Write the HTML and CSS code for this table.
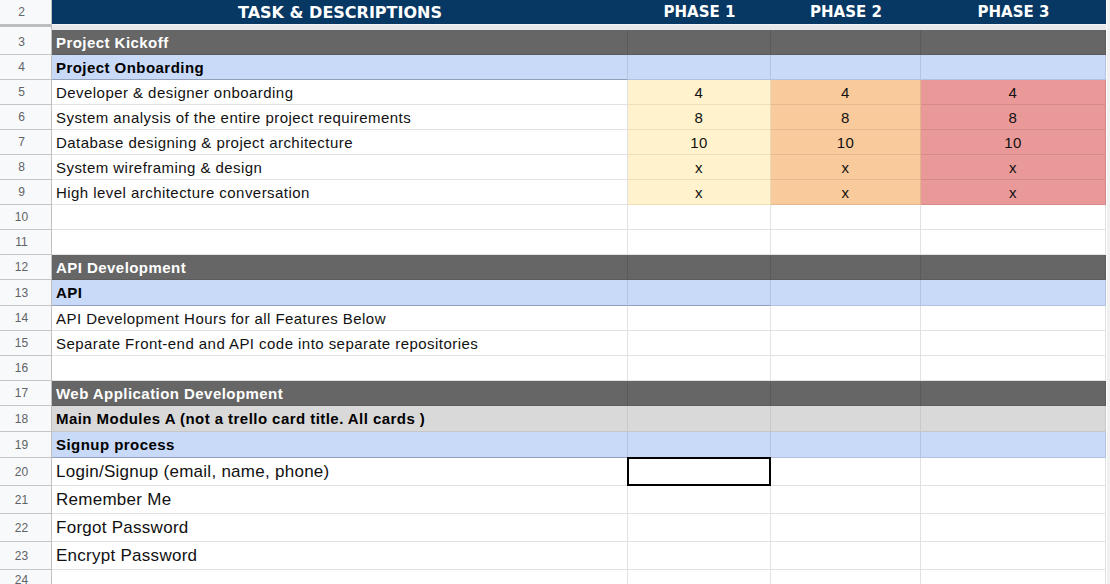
FILE: index.html
```html
<!DOCTYPE html>
<html>
<head>
<meta charset="utf-8">
<link rel="stylesheet" href="styles.css">
</head>
<body>
<div class="page">
  <div class="sheet">
    <div class="row r-head">
      <div class="rh">2</div>
      <div class="c hd">TASK &amp; DESCRIPTIONS</div>
      <div class="c hd">PHASE 1</div>
      <div class="c hd">PHASE 2</div>
      <div class="c hd">PHASE 3</div>
    </div>
    <div class="row r-freeze">
      <div class="rh"></div>
      <div class="c"></div>
      <div class="c"></div>
      <div class="c"></div>
      <div class="c"></div>
    </div>

    <div class="row h25 sec">
      <div class="rh">3</div>
      <div class="c b">Project Kickoff</div>
      <div class="c"></div><div class="c"></div><div class="c"></div>
    </div>
    <div class="row h25 sub">
      <div class="rh">4</div>
      <div class="c b">Project Onboarding</div>
      <div class="c"></div><div class="c"></div><div class="c"></div>
    </div>
    <div class="row h25">
      <div class="rh">5</div>
      <div class="c">Developer &amp; designer onboarding</div>
      <div class="c p1">4</div><div class="c p2">4</div><div class="c p3">4</div>
    </div>
    <div class="row h25">
      <div class="rh">6</div>
      <div class="c">System analysis of the entire project requirements</div>
      <div class="c p1">8</div><div class="c p2">8</div><div class="c p3">8</div>
    </div>
    <div class="row h25">
      <div class="rh">7</div>
      <div class="c">Database designing &amp; project architecture</div>
      <div class="c p1">10</div><div class="c p2">10</div><div class="c p3">10</div>
    </div>
    <div class="row h25">
      <div class="rh">8</div>
      <div class="c">System wireframing &amp; design</div>
      <div class="c p1">x</div><div class="c p2">x</div><div class="c p3">x</div>
    </div>
    <div class="row h25">
      <div class="rh">9</div>
      <div class="c">High level architecture conversation</div>
      <div class="c p1">x</div><div class="c p2">x</div><div class="c p3">x</div>
    </div>
    <div class="row h25">
      <div class="rh">10</div>
      <div class="c"></div><div class="c"></div><div class="c"></div><div class="c"></div>
    </div>
    <div class="row h25">
      <div class="rh">11</div>
      <div class="c"></div><div class="c"></div><div class="c"></div><div class="c"></div>
    </div>
    <div class="row h25 sec">
      <div class="rh">12</div>
      <div class="c b">API Development</div>
      <div class="c"></div><div class="c"></div><div class="c"></div>
    </div>
    <div class="row h26 sub sub-dark">
      <div class="rh">13</div>
      <div class="c b">API</div>
      <div class="c dk"></div><div class="c"></div><div class="c"></div>
    </div>
    <div class="row h25">
      <div class="rh">14</div>
      <div class="c">API Development Hours for all Features Below</div>
      <div class="c"></div><div class="c"></div><div class="c"></div>
    </div>
    <div class="row h25">
      <div class="rh">15</div>
      <div class="c">Separate Front-end and API code into separate repositories</div>
      <div class="c"></div><div class="c"></div><div class="c"></div>
    </div>
    <div class="row h25">
      <div class="rh">16</div>
      <div class="c"></div><div class="c"></div><div class="c"></div><div class="c"></div>
    </div>
    <div class="row h25 sec">
      <div class="rh">17</div>
      <div class="c b">Web Application Development</div>
      <div class="c"></div><div class="c"></div><div class="c"></div>
    </div>
    <div class="row h26 grey">
      <div class="rh">18</div>
      <div class="c b">Main Modules A (not a trello card title. All cards )</div>
      <div class="c"></div><div class="c"></div><div class="c"></div>
    </div>
    <div class="row h26 sub">
      <div class="rh">19</div>
      <div class="c b">Signup process</div>
      <div class="c"></div><div class="c"></div><div class="c"></div>
    </div>
    <div class="row h28 big">
      <div class="rh">20</div>
      <div class="c">Login/Signup (email, name, phone)</div>
      <div class="c sel"></div><div class="c"></div><div class="c"></div>
    </div>
    <div class="row h28 big">
      <div class="rh">21</div>
      <div class="c">Remember Me</div>
      <div class="c"></div><div class="c"></div><div class="c"></div>
    </div>
    <div class="row h28 big">
      <div class="rh">22</div>
      <div class="c">Forgot Password</div>
      <div class="c"></div><div class="c"></div><div class="c"></div>
    </div>
    <div class="row h28 big">
      <div class="rh">23</div>
      <div class="c">Encrypt Password</div>
      <div class="c"></div><div class="c"></div><div class="c"></div>
    </div>
    <div class="row h28 big last">
      <div class="rh">24</div>
      <div class="c"></div><div class="c"></div><div class="c"></div><div class="c"></div>
    </div>
  </div>
  <div class="vscroll"></div>
</div>
</body>
</html>
```

FILE: styles.css
```css
* { box-sizing: border-box; }
html, body { margin: 0; padding: 0; background: #ffffff; overflow: hidden; }
body { font-family: "Liberation Sans", Arial, sans-serif; color: #000; }

.page { display: flex; width: 1110px; height: 584px; overflow: hidden; }
.sheet { width: 1106px; flex: none; }
.vscroll { flex: 1; background: #f1f1f1; border-left: 1px solid #ffffff; }

.row {
  display: grid;
  grid-template-columns: 52px 576px 143px 150px 185px;
}
.h25 { height: 25px; }
.h26 { height: 26px; }
.h28 { height: 28px; }

.rh {
  background: #f8f9fa;
  color: #5f6368;
  font-size: 12px;
  border-right: 1px solid #c0c0c0;
  border-bottom: 1px solid #c4c7c5;
  display: flex;
  align-items: center;
  justify-content: center;
  padding-right: 8px;
}

.c {
  border-right: 1px solid #e2e2e2;
  border-bottom: 1px solid #e2e2e2;
  font-size: 15px;
  letter-spacing: 0.45px;
  color: #111;
  display: flex;
  align-items: center;
  justify-content: center;
  white-space: nowrap;
  overflow: hidden;
  position: relative;
}
.row > .c:nth-child(2) { justify-content: flex-start; padding-left: 4px; }
.b { font-weight: bold; color: #000; }

/* header row */
.r-head { height: 24px; }
.r-head .rh { border-bottom: none; }
.r-head .c.hd {
  background: #073763;
  color: #ffffff;
  font-family: "DejaVu Sans", Verdana, sans-serif;
  font-weight: bold;
  font-size: 15px;
  letter-spacing: 0;
  border: none;
  justify-content: center;
  padding-left: 0;
}
.r-head > .c.hd:nth-child(2) { font-size: 16px; justify-content: center; padding-left: 0; }

/* frozen separator */
.r-freeze { height: 6px; }
.r-freeze .rh { border-top: 3px solid #bdbdbd; border-bottom: none; }
.r-freeze .c { background: #e6e8ec; border: none; border-top: 1px solid #f4f5f7; }

/* section rows */
.sec .c { background: #666666; color: #ffffff; border-right-color: #5a5a5a; border-bottom-color: #5c5c5c; }
.sub .c { background: #c9daf8; border-right-color: #b5c4de; border-bottom-color: #b3c2dc; }
.sub > .c:nth-child(2) { border-bottom-color: #93a1b8; }
.sub-dark .c.dk { border-bottom-color: #93a1b8; }
.grey .c { background: #d9d9d9; border-right-color: #c8c8c8; border-bottom-color: #c6c6c6; }

/* phase colours */
.p1 { background: #fff2cc; border-right-color: #e8d9b0 !important; border-bottom-color: #eedfb6 !important; }
.p2 { background: #f9cb9c; border-right-color: #e1b388 !important; border-bottom-color: #e6b98d !important; }
.p3 { background: #ea9999; border-right-color: #d48787 !important; border-bottom-color: #d88a8a !important; }

.big .c { font-size: 17px; letter-spacing: 0.27px; }
.last .rh { align-items: flex-start; padding-top: 3px; }

.sel::after {
  content: "";
  position: absolute;
  left: -1px; top: -1px; right: -1px; bottom: -1px;
  border: 2px solid #000;
}
.sel { overflow: visible; }
```
